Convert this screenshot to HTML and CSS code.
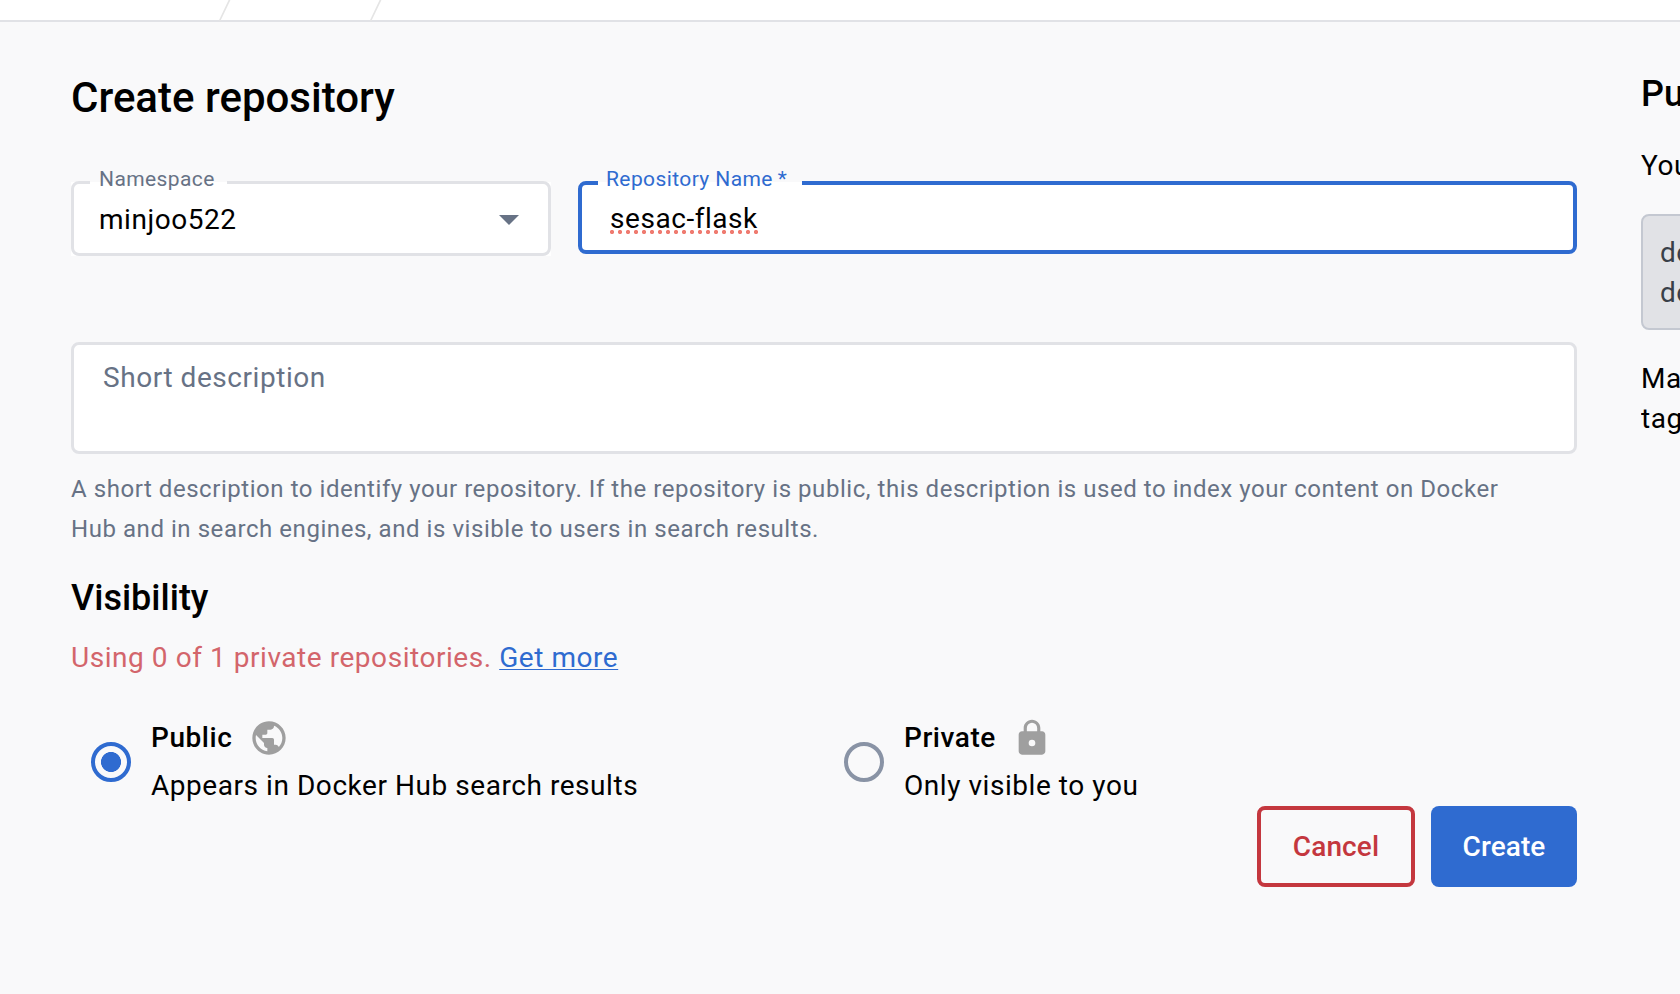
FILE: index.html
```html
<!DOCTYPE html>
<html lang="en">
<head>
<meta charset="utf-8">
<title>Create repository</title>
<link rel="stylesheet" href="styles.css">
</head>
<body>
<header class="topbar">
  <svg class="crumbs" width="420" height="22" viewBox="0 0 420 22" fill="none" stroke="#e5e5e5" stroke-width="1.7"><path d="M230 -1L219.5 21M381 -1L370.500 21"/></svg>
</header>
<div class="page">
  <main class="form">
    <h1 class="title">Create repository</h1>
    <div class="fields">
      <div class="select-wrap">
        <div class="field select"><span class="value">minjoo522</span><svg width="20" height="10" viewBox="0 0 20 10"><path d="M0 0h20L10 10z" fill="#677285"/></svg></div>
        <label class="label label-ns">Namespace</label>
      </div>
      <div class="repo-wrap">
        <div class="field repo"><span class="value misspelled">sesac-flask</span></div>
        <label class="label label-repo">Repository Name<span class="star">*</span></label>
      </div>
    </div>
    <div class="field description">Short description</div>
    <p class="helper">A short description to identify your repository. If the repository is public, this description is used to index your content on Docker<br>Hub and in search engines, and is visible to users in search results.</p>
    <h2 class="subtitle">Visibility</h2>
    <p class="usage">Using 0 of 1 private repositories. <a class="link">Get more</a></p>
    <div class="options">
      <div class="option">
        <span class="radio checked"></span>
        <div class="option-text">
          <div class="option-name"><span class="name">Public</span><svg class="icon public" viewBox="0 0 24 24"><path d="M12 2C6.480 2 2 6.480 2 12s4.480 10 10 10 10-4.480 10-10S17.520 2 12 2zm-1 17.930c-3.950-.49-7-3.850-7-7.930 0-.62.080-1.210.21-1.790L9 15v1c0 1.100.9 2 2 2v1.930zm6.900-2.540c-.26-.81-1-1.390-1.900-1.390h-1v-3c0-.55-.45-1-1-1H8v-2h2c.55 0 1-.45 1-1V7h2c1.100 0 2-.9 2-2v-.41c2.930 1.190 5 4.060 5 7.410 0 2.080-.8 3.970-2.100 5.390z"/></svg></div>
          <div>Appears in Docker Hub search results</div>
        </div>
      </div>
      <div class="option">
        <span class="radio"></span>
        <div class="option-text">
          <div class="option-name"><span class="name">Private</span><svg class="icon lock" viewBox="0 0 24 24"><path fill-rule="evenodd" d="M18 8h-1V6c0-2.760-2.240-5-5-5S7 3.240 7 6v2H6c-1.100 0-2 .9-2 2v10c0 1.100.9 2 2 2h12c1.100 0 2-.9 2-2V10c0-1.100-.9-2-2-2zM12 13a2 2 0 1 1 0 4 2 2 0 0 1 0-4zM8.900 8V6a3.100 3.100 0 0 1 6.200 0v2z"/></svg></div>
          <div>Only visible to you</div>
        </div>
      </div>
    </div>
    <div class="actions">
      <button class="btn cancel">Cancel</button>
      <button class="btn create">Create</button>
    </div>
  </main>
  <aside class="side">
    <h2 class="side-title">Pu</h2>
    <p class="side-text">You</p>
    <div class="code">do<br>do</div>
    <p class="side-text">Ma<br>tag</p>
  </aside>
</div>
</body>
</html>
```
FILE: styles.css
```css
* { box-sizing: border-box; margin: 0; }
body {
  width: 1680px; height: 994px; overflow: hidden; background: #f9f9fa; color: #000;
  font: 28px/40px Roboto, "Liberation Sans", sans-serif; letter-spacing: 0.55px; white-space: nowrap;
}
.topbar { height: 22px; background: #fff; border-bottom: 2px solid #e1e2e6; }
.crumbs { display: block; }
.page { display: flex; gap: 64px; padding-left: 71px; height: 972px; overflow: hidden; }
.form { flex: none; width: 1506px; padding-top: 52px; }
.title { font-size: 42px; line-height: 48px; font-weight: 500; letter-spacing: 0; }
.fields { display: flex; gap: 27px; margin-top: 59px; height: 75px; }
.select-wrap { position: relative; width: 480px; height: 75px; background: linear-gradient(transparent 1px, #fff 1px); }
.repo-wrap { position: relative; width: 999px; }
.field { background: #fff; border: 3px solid #e1e2e6; border-radius: 8px; }
.select { display: flex; align-items: center; justify-content: space-between; height: 75px; padding: 2px 29px 0 25px; }
.select svg { margin-top: 1px; }
.repo { height: 73px; border: 4px solid #2f6bd0; padding: 14px 26px; }
.misspelled {
  display: inline-block; height: 40px; padding: 0 2px;
  background: radial-gradient(circle at 4px 2px, #ef7b70 1.8px, transparent 2.4px) 0 31px / 8px 4px repeat-x;
}
.label {
  position: absolute; top: -14px; height: 24px; line-height: 25px; font-size: 21px; letter-spacing: 0.4px;
  background: linear-gradient(#f9f9fa 15px, #fff 15px);
}
.label-ns { left: 19px; width: 137px; padding-left: 9px; color: #677285; }
.label-repo { left: 20px; width: 204px; padding-left: 8px; color: #2f6bd0; }
.star { margin-left: 5px; }
.description { height: 112px; margin-top: 86px; padding: 13px 29px; color: #677285; }
.helper { margin-top: 15px; font-size: 24px; color: #677285; }
.subtitle { margin-top: 27px; font-size: 36px; line-height: 44px; font-weight: 500; letter-spacing: 0; }
.usage { margin-top: 18px; color: #d3656b; }
.link { color: #2f6bd0; text-decoration: underline; text-decoration-thickness: 1px; text-underline-offset: 2px; text-decoration-skip-ink: none; }
.options { display: grid; grid-template-columns: 753px 753px; margin-top: 40px; }
.option { display: flex; align-items: center; gap: 20px; padding-left: 20px; }
.radio { width: 40px; height: 40px; border: 4px solid #8993a5; border-radius: 50%; }
.checked { border-color: #2f6bd0; background: radial-gradient(circle, #2f6bd0 9.7px, transparent 10.3px); }
.option-text { display: grid; gap: 8px; }
.option-name { display: flex; height: 40px; }
.name { font-weight: 500; }
.icon { width: 40px; height: 40px; fill: #9f9f9f; }
.public { margin-left: 17px; }
.lock { margin-left: 16px; }
.actions { display: flex; justify-content: flex-end; gap: 16px; }
.btn { height: 81px; border: 0; border-radius: 8px; font: 500 28px/40px Roboto, sans-serif; letter-spacing: 0.1px; padding: 0; }
.cancel { width: 158px; border: 4px solid #c4373e; color: #c4373e; background: transparent; }
.create { width: 146px; background: #2f6bd0; color: #fff; }
.side { flex: none; width: 39px; padding-top: 50px; overflow: hidden; }
.side-title { font-size: 36px; line-height: 44px; font-weight: 500; letter-spacing: 0; }
.side-text { margin-top: 30px; }
.code { width: 400px; height: 116px; margin: 28px 0; padding: 17px 17px 0; border: 2px solid #c4c8d1; border-radius: 8px; background: #e1e2e6; color: #393f49; }
.code + .side-text { margin-top: 29px; }
```
